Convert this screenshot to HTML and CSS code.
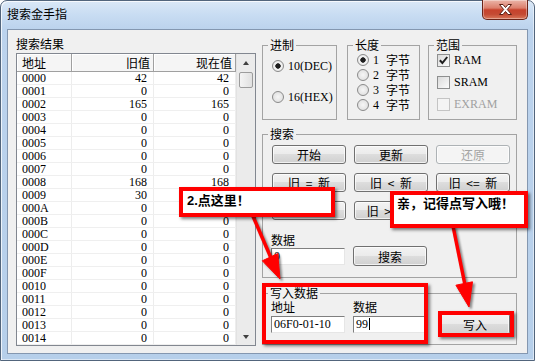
FILE: index.html
```html
<!DOCTYPE html>
<html lang="zh-CN">
<head>
<meta charset="utf-8">
<title>搜索金手指</title>
<link rel="stylesheet" href="styles.css">
</head>
<body>
<div class="window">
  <div class="titlebar">
    <span class="title">搜索金手指</span>
    <div class="close"><svg width="15" height="11" viewBox="0 0 15 11"><path d="M1.5 0.5h3.5l2.5 3 2.5-3h3.5l-4.2 5 4.2 5h-3.5l-2.5-3-2.5 3h-3.5l4.2-5z" fill="#fff" stroke="#5a1e12" stroke-width="1"/></svg></div>
  </div>
  <div class="client">
    <div class="results">
      <div class="caption">搜索结果</div>
      <div class="list">
        <div class="cols">
          <div class="row head"><div>地址</div><div class="r">旧值</div><div class="r">现在值</div></div>
          <div class="row"><div>0000</div><div class="r">42</div><div class="r">42</div></div>
          <div class="row"><div>0001</div><div class="r">0</div><div class="r">0</div></div>
          <div class="row"><div>0002</div><div class="r">165</div><div class="r">165</div></div>
          <div class="row"><div>0003</div><div class="r">0</div><div class="r">0</div></div>
          <div class="row"><div>0004</div><div class="r">0</div><div class="r">0</div></div>
          <div class="row"><div>0005</div><div class="r">0</div><div class="r">0</div></div>
          <div class="row"><div>0006</div><div class="r">0</div><div class="r">0</div></div>
          <div class="row"><div>0007</div><div class="r">0</div><div class="r">0</div></div>
          <div class="row"><div>0008</div><div class="r">168</div><div class="r">168</div></div>
          <div class="row"><div>0009</div><div class="r">30</div><div class="r">30</div></div>
          <div class="row"><div>000A</div><div class="r">0</div><div class="r">0</div></div>
          <div class="row"><div>000B</div><div class="r">0</div><div class="r">0</div></div>
          <div class="row"><div>000C</div><div class="r">0</div><div class="r">0</div></div>
          <div class="row"><div>000D</div><div class="r">0</div><div class="r">0</div></div>
          <div class="row"><div>000E</div><div class="r">0</div><div class="r">0</div></div>
          <div class="row"><div>000F</div><div class="r">0</div><div class="r">0</div></div>
          <div class="row"><div>0010</div><div class="r">0</div><div class="r">0</div></div>
          <div class="row"><div>0011</div><div class="r">0</div><div class="r">0</div></div>
          <div class="row"><div>0012</div><div class="r">0</div><div class="r">0</div></div>
          <div class="row"><div>0013</div><div class="r">0</div><div class="r">0</div></div>
          <div class="row"><div>0014</div><div class="r">0</div><div class="r">0</div></div>
        </div>
        <div class="vscroll">
          <div class="sb-btn"><span class="tri up"></span></div>
          <div class="thumb"></div>
          <div class="sb-fill"></div>
          <div class="sb-btn"><span class="tri down"></span></div>
        </div>
      </div>
    </div>
    <div class="side">
      <div class="top-groups">
        <fieldset class="grp g-base"><legend>进制</legend>
          <div class="opts base">
            <div class="opt"><span class="radio on"></span>10(DEC)</div>
            <div class="opt"><span class="radio"></span>16(HEX)</div>
          </div>
        </fieldset>
        <fieldset class="grp g-len"><legend>长度</legend>
          <div class="opts len">
            <div class="opt"><span class="radio on"></span>1<span class="unit">字节</span></div>
            <div class="opt"><span class="radio"></span>2<span class="unit">字节</span></div>
            <div class="opt"><span class="radio"></span>3<span class="unit">字节</span></div>
            <div class="opt"><span class="radio"></span>4<span class="unit">字节</span></div>
          </div>
        </fieldset>
        <fieldset class="grp g-range"><legend>范围</legend>
          <div class="opts range">
            <div class="opt"><span class="check"><svg width="11" height="11" viewBox="0 0 11 11"><path d="M1.8 5.2l2.6 2.8 4.8-6" fill="none" stroke="#1e1e1e" stroke-width="2"/></svg></span>RAM</div>
            <div class="opt"><span class="check"></span>SRAM</div>
            <div class="opt disabled"><span class="check"></span>EXRAM</div>
          </div>
        </fieldset>
      </div>
      <fieldset class="grp g-search"><legend>搜索</legend>
        <div class="search-body">
          <div class="btn-grid">
            <button class="btn">开始</button>
            <button class="btn">更新</button>
            <button class="btn disabled">还原</button>
            <button class="btn">旧 = 新</button>
            <button class="btn">旧 &lt; 新</button>
            <button class="btn">旧 &lt;= 新</button>
            <button class="btn">旧 &gt; 新</button>
            <button class="btn">旧 &gt;= 新</button>
            <button class="btn">旧 != 新</button>
          </div>
          <div class="data-label">数据</div>
          <div class="search-row">
            <div class="edit">0</div>
            <button class="btn search">搜索</button>
          </div>
        </div>
      </fieldset>
      <fieldset class="grp g-write"><legend>写入数据</legend>
        <div class="write-body">
          <div class="wcol">
            <div class="wlabel">地址</div>
            <div class="edit">06F0-01-10</div>
          </div>
          <div class="wcol">
            <div class="wlabel">数据</div>
            <div class="edit wide">99<span class="caret"></span></div>
          </div>
          <button class="btn write">写入</button>
        </div>
      </fieldset>
    </div>
  </div>
</div>

<svg class="arrows" width="535" height="361" viewBox="0 0 535 361">
  <g fill="#ff0000" stroke="#ff0000">
    <line x1="252" y1="214" x2="271" y2="258" stroke-width="3.5"/>
    <polygon points="280,279 262.3,260.8 277.7,253.6" stroke-width="1"/>
    <line x1="453" y1="226" x2="465" y2="285" stroke-width="3.5"/>
    <polygon points="469,307 455.9,285.2 472.5,281.8" stroke-width="1"/>
  </g>
</svg>
<div class="note note-1">2.点这里！</div>
<div class="note note-2">亲，记得点写入哦！</div>
<div class="note frame-1"></div>
<div class="note frame-2"></div>
</body>
</html>
```

FILE: styles.css
```css
* { box-sizing: border-box; }
html, body { margin: 0; padding: 0; }
body {
  position: relative;
  width: 535px;
  height: 361px;
  overflow: hidden;
  background: #fff;
  font-family: "Liberation Serif", "Noto Sans CJK SC", serif;
  font-size: 12px;
  line-height: 14px;
  color: #000;
}

.window {
  width: 535px;
  height: 361px;
  display: flex;
  flex-direction: column;
  padding: 0 6px 6px;
  border: 1px solid #52657c;
  border-radius: 7px 7px 0 0;
  background: linear-gradient(180deg, #dae8f7 0, #c8dcf2 14px, #bcd3ed 28px, #b6cfea 100%);
  box-shadow: inset 1px 1px 0 rgba(255,255,255,.75), inset -1px -1px 0 rgba(255,255,255,.5);
}
.titlebar {
  height: 28px;
  flex: none;
  display: flex;
  justify-content: space-between;
  align-items: flex-start;
}
.title {
  font-family: "Noto Sans CJK SC", sans-serif;
  font-size: 12px;
  line-height: 14px;
  margin-top: 6px;
}
.close {
  width: 46px;
  height: 20px;
  margin-top: -1px;
  display: flex;
  align-items: center;
  justify-content: center;
  border: 1px solid #6b2418;
  border-top: none;
  border-radius: 0 0 5px 5px;
  background: linear-gradient(180deg, #ebb5a8 0%, #dc7f6c 42%, #c7422c 52%, #c44a33 75%, #d9775a 100%);
  box-shadow: inset 0 0 0 1px rgba(255,255,255,.35);
}

.client {
  flex: 1;
  display: flex;
  padding: 7px 10px 0 8px;
  background: #f0f0f0;
  border: 1px solid #8497b0;
}

/* result list */
.results { width: 240px; flex: none; }
.caption {
  font-family: "Noto Sans CJK SC", sans-serif;
  line-height: 14px;
  margin-bottom: 2px;
}
.list {
  display: flex;
  height: 293px;
  border: 1px solid #828790;
  background: #fff;
}
.cols { width: 219px; flex: none; }
.row {
  display: grid;
  grid-template-columns: 55px 82px 82px;
  height: 13px;
  line-height: 12px;
  border-bottom: 1px solid #efefef;
}
.row > div {
  padding: 0 6px 0 5px;
  border-right: 1px solid #ededed;
  white-space: nowrap;
  overflow: hidden;
}
.row .r { text-align: right; }
.row.head {
  height: 18px;
  line-height: 17px;
  background: #f5f5f5;
  border-bottom: 1px solid #a0a0a0;
}
.row.head > div {
  border-right: 1px solid #a0a0a0;
  box-shadow: inset 1px 1px 0 #fff;
  padding-right: 3px;
  font-family: "Noto Sans CJK SC", sans-serif;
}
.vscroll {
  flex: 1;
  display: flex;
  flex-direction: column;
  background: #ebebeb;
  border-left: 1px solid #e2e2e2;
}
.sb-btn {
  height: 17px;
  flex: none;
  display: flex;
  align-items: center;
  justify-content: center;
}
.tri {
  width: 0;
  height: 0;
  border-left: 3.5px solid transparent;
  border-right: 3.5px solid transparent;
}
.tri.up { border-bottom: 4px solid #404040; }
.tri.down { border-top: 4px solid #404040; }
.thumb {
  height: 16px;
  flex: none;
  margin: 1px 2px 0;
  border: 1px solid #9c9c9c;
  border-radius: 2px;
  background: linear-gradient(90deg, #f4f4f4, #e0e0e0);
}
.sb-fill { flex: 1; }

/* right side */
.side { width: 255px; flex: none; margin-left: 6px; padding-top: 1px; }
.top-groups { display: flex; height: 82px; }
.grp {
  margin: 0;
  padding: 0;
  min-width: 0;
  border: 1px solid #a3a3a3;
}
legend {
  padding: 0 2px;
  margin-left: 5px;
  line-height: 14px;
  font-family: "Noto Sans CJK SC", sans-serif;
}
.g-base { width: 75px; height: 82px; }
.g-len { width: 73px; height: 82px; margin-left: 10px; }
.g-range { width: 89px; height: 82px; margin-left: 8px; }

.opts { display: flex; flex-direction: column; }
.opts.base { padding: 7px 0 0 9px; gap: 17px; }
.opts.len { padding: 0 0 0 9px; }
.opts.len .opt { height: 15px; }
.opts.range { padding: 1px 0 0 8px; gap: 8px; }
.opt { display: flex; align-items: center; height: 14px; white-space: nowrap; }
.unit { margin-left: 7px; font-family: "Noto Sans CJK SC", sans-serif; }
.radio {
  width: 12px;
  height: 12px;
  flex: none;
  margin-right: 4px;
  border-radius: 50%;
  border: 1px solid #8a8a8a;
  background: radial-gradient(circle, #f6f6f6 0, #dadada 100%);
}
.radio.on { background: radial-gradient(circle, #1e1e1e 0 2.4px, #f6f6f6 3px, #dadada 100%); }
.check {
  width: 13px;
  height: 13px;
  flex: none;
  margin-right: 4px;
  border: 1px solid #8e8f8f;
  background: linear-gradient(135deg, #dadada, #fbfbfb);
  display: flex;
  align-items: center;
  justify-content: center;
}
.opt.disabled { color: #a0a0a0; }
.opt.disabled .check { border-color: #c4c4c4; background: #f4f4f4; }

.g-search { width: 255px; height: 151px; margin-top: 7px; }
.search-body { padding: 4px 0 0 8px; }
.btn-grid {
  display: grid;
  grid-template-columns: repeat(3, 74px);
  grid-auto-rows: 19px;
  column-gap: 8px;
  row-gap: 9px;
  margin-left: 1px;
}
.btn {
  font-family: "Noto Sans CJK SC", sans-serif;
  font-size: 12px;
  line-height: 15px;
  word-spacing: 3px;
  padding: 0;
  color: #000;
  border: 1px solid #707070;
  border-radius: 3px;
  background: linear-gradient(180deg, #f3f3f3 0%, #ebebeb 49%, #dddddd 50%, #d0d0d0 100%);
  box-shadow: inset 0 0 0 1px rgba(255,255,255,.7);
}
.btn.disabled { color: #a3a3a3; border-color: #adb2b5; background: #f4f4f4; }
.data-label { margin-top: 13px; line-height: 13px; font-family: "Noto Sans CJK SC", sans-serif; }
.search-row { display: flex; align-items: center; height: 20px; gap: 8px; }
.btn.search { width: 74px; height: 20px; }
.edit {
  width: 74px;
  height: 17px;
  flex: none;
  padding-left: 2px;
  line-height: 15px;
  background: #fff;
  border: 1px solid;
  border-color: #7f7f7f #e6e6e6 #e6e6e6 #7f7f7f;
  white-space: nowrap;
}
.edit.wide { width: 75px; }
.caret {
  display: inline-block;
  width: 1px;
  height: 12px;
  margin-left: 1px;
  vertical-align: -2px;
  background: #000;
}

.g-write { width: 255px; height: 59px; margin-top: 8px; }
.write-body { display: flex; align-items: flex-start; padding-left: 8px; }
.wcol { display: flex; flex-direction: column; }
.wcol + .wcol { margin-left: 8px; }
.wlabel { line-height: 14px; margin-bottom: 2px; font-family: "Noto Sans CJK SC", sans-serif; }
.btn.write { width: 70px; height: 22px; margin: 13px 0 0 12px; }

/* annotations laid over the screenshot */
.arrows {
  position: absolute;
  left: 0;
  top: 0;
  pointer-events: none;
  filter: drop-shadow(2px 2px 1px rgba(0,0,0,.45));
}
.note {
  position: absolute;
  border: 4px solid #ff0000;
  box-shadow: 2px 2px 3px rgba(0,0,0,.5);
  font-family: "Liberation Sans", "Noto Sans CJK SC", sans-serif;
  font-weight: bold;
  font-size: 13px;
  white-space: nowrap;
}
.note-1 { left: 179px; top: 187px; width: 156px; height: 30px; background: #fff; padding-left: 4px; line-height: 20px; }
.note-2 { left: 390px; top: 191px; width: 138px; height: 37px; background: #fff; padding-left: 3px; line-height: 18px; }
.frame-1 { left: 262px; top: 283px; width: 166px; height: 61px; }
.frame-2 { left: 438px; top: 311px; width: 76px; height: 26px; }
```
